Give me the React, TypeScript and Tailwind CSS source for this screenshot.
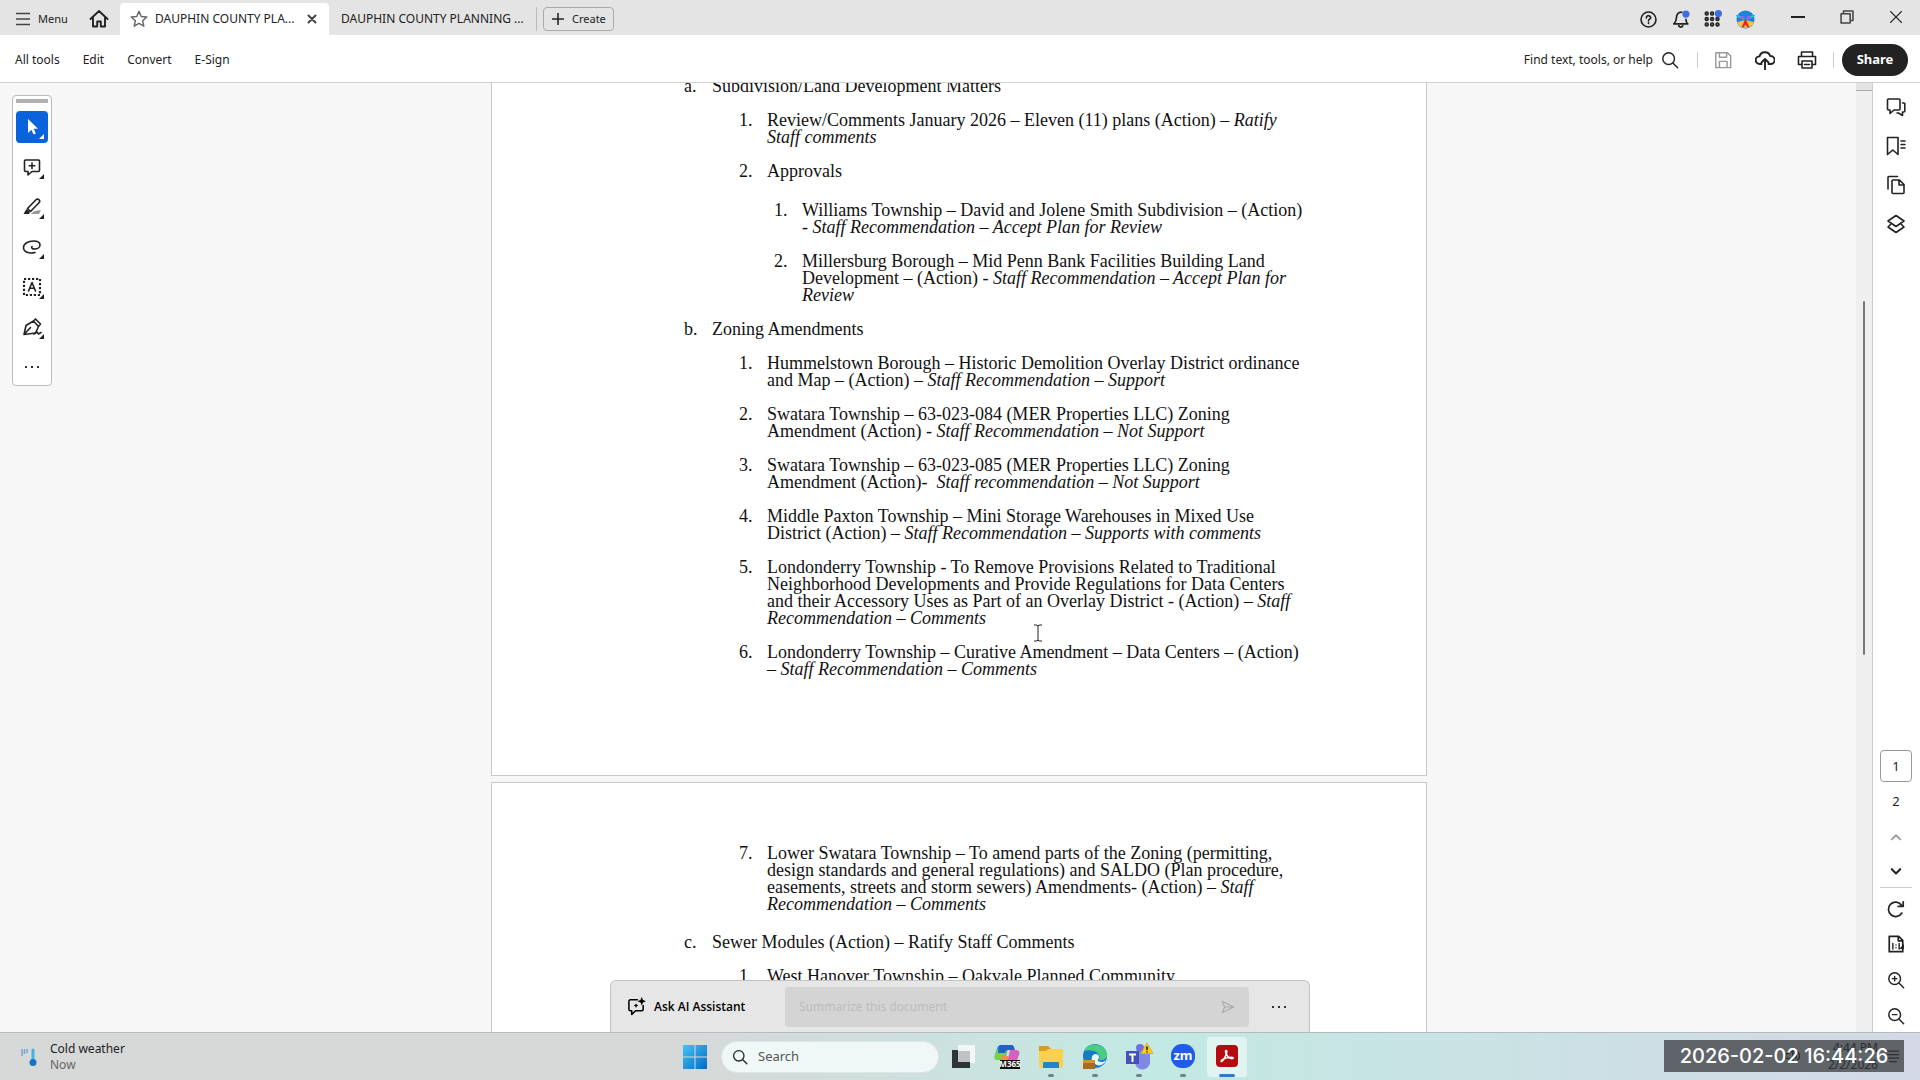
import type { ReactNode } from "react";

type IconProps = { className?: string; children: ReactNode };

const Icon = ({ className = "size-5", children }: IconProps) => (
  <svg
    viewBox="0 0 20 20"
    fill="none"
    stroke="currentColor"
    strokeWidth="1.6"
    strokeLinecap="round"
    strokeLinejoin="round"
    className={`shrink-0 ${className}`}
    aria-hidden="true"
  >
    {children}
  </svg>
);

const searchShape = (
  <>
    <circle cx="8.5" cy="8.5" r="6.5" />
    <path d="M13.500 13.500l5 5" />
  </>
);

const tools = [
  {
    label: "Select",
    icon: (
      <path
        d="M6 2v14l3.400-3.300 2.200 4.800 2.300-1-2.200-4.700H16z"
        fill="currentColor"
        stroke="none"
      />
    ),
  },
  {
    label: "Add comment",
    icon: (
      <path d="M3.500 3h13a1 1 0 011 1v9.500a1 1 0 01-1 1H10l-4 3.500v-3.500H3.500a1 1 0 01-1-1V4a1 1 0 011-1zM10 6v5.500M7.200 8.700h5.600" />
    ),
  },
  {
    label: "Highlight",
    icon: (
      <>
        <path d="M9 17c2-3 5-3.500 10-4l-2 4z" fill="#999" stroke="none" />
        <path d="M5.500 11.500L14 2.800a2 2 0 013 3L8.500 14.500zM5.500 11.500l3 3" />
        <path d="M4.500 12L1.500 17h5.500l1-2z" fill="currentColor" stroke="none" />
      </>
    ),
  },
  {
    label: "Draw",
    icon: (
      <path d="M13 15.500c-6 1.500-11.500-.5-11.500-5 0-4 5-6.500 10-6.500 4 0 6.500 1.500 6.500 4s-2.500 4-5.500 4c-2 0-3.500-1-2.500-2.500" />
    ),
  },
  {
    label: "Text box",
    icon: (
      <>
        <path
          d="M2 2h16v16H2z"
          strokeDasharray="2.200 1.800"
          strokeLinecap="butt"
          strokeWidth="2.200"
        />
        <path d="M6.500 14L10 5.500l3.500 8.500M7.800 11.300h4.400" />
      </>
    ),
  },
  {
    label: "Sign",
    icon: (
      <>
        <path d="M2 17.500L4 8.500l7.500-4.500 5 5.500-3 6.500zM2 17.500l6.500-7M11.500 4l2-2 5 5-2 2.500" />
        <path d="M12 17l3-2 1.500 2 2.500-1.500" />
      </>
    ),
  },
];

const panels = [
  {
    label: "Comments",
    icon: (
      <path d="M2.500 2H13a1 1 0 011 1v9a1 1 0 01-1 1H8l-4 3.500V13H2.500a1 1 0 01-1-1V3a1 1 0 011-1M16.500 6H18a.8.800 0 01.8.800V14a1 1 0 01-1 1h-1.300v3.500L12.500 16H11" />
    ),
  },
  {
    label: "Bookmarks",
    icon: (
      <path d="M1.500 1.500h10.500v17l-5.200-4.500-5.300 4.500zM15 5h4M15 8.500h4M15 12h4" />
    ),
  },
  {
    label: "Pages",
    icon: (
      <path d="M2 14V2.500a1 1 0 011-1h8.500M7 5h6.500l4.500 4.500v8a1 1 0 01-1 1H7a1 1 0 01-1-1V6a1 1 0 011-1zM13 5v5h5" />
    ),
  },
  {
    label: "Layers",
    icon: (
      <path d="M10 1.500l8 5.500-8 5.500L2 7zM4.500 10.500L2 13l8 5.500 8-5.500-2.500-2.500" />
    ),
  },
];

const zoningItems: [string, string][] = [
  [
    "Hummelstown Borough – Historic Demolition Overlay District ordinance\nand Map – (Action) – ",
    "Staff Recommendation – Support",
  ],
  [
    "Swatara Township – 63-023-084 (MER Properties LLC) Zoning\nAmendment (Action) - ",
    "Staff Recommendation – Not Support",
  ],
  [
    "Swatara Township – 63-023-085 (MER Properties LLC) Zoning\nAmendment (Action)-  ",
    "Staff recommendation – Not Support",
  ],
  [
    "Middle Paxton Township – Mini Storage Warehouses in Mixed Use\nDistrict (Action) – ",
    "Staff Recommendation – Supports with comments",
  ],
  [
    "Londonderry Township - To Remove Provisions Related to Traditional\nNeighborhood Developments and Provide Regulations for Data Centers\nand their Accessory Uses as Part of an Overlay District - (Action) – ",
    "Staff\nRecommendation – Comments",
  ],
  [
    "Londonderry Township – Curative Amendment – Data Centers – (Action)\n– ",
    "Staff Recommendation – Comments",
  ],
];

const Item = ({
  marker,
  text,
  note,
  children,
}: {
  marker: string;
  text: string;
  note?: string;
  children?: ReactNode;
}) => (
  <li className="flex">
    <span className="w-7 shrink-0">{marker}</span>
    <div>
      <p className="whitespace-pre">
        {text}
        {note && <em>{note}</em>}
      </p>
      {children}
    </div>
  </li>
);

const Corner = ({ className = "" }: { className?: string }) => (
  <svg
    viewBox="0 0 5 5"
    className={`absolute right-1 bottom-1 size-[5px] ${className}`}
    aria-hidden="true"
  >
    <path d="M5 0v5H0z" fill="currentColor" />
  </svg>
);

const Dots = () => (
  <>
    <span className="size-0.5 bg-[#333]" />
    <span className="size-0.5 bg-[#333]" />
    <span className="size-0.5 bg-[#333]" />
  </>
);

const TabBar = () => (
  <header className="flex h-[35px] shrink-0 items-center bg-[#e4e4e4] pt-[3px] text-xs">
    <button className="flex w-[86px] items-center gap-2 pl-4 text-[11px]">
      <svg viewBox="0 0 14 14" className="size-[14px]" aria-hidden="true">
        <path d="M0 1.500h14M0 7h14M0 12.500h14" stroke="#444" strokeWidth="1.600" />
      </svg>
      Menu
    </button>
    <button aria-label="Home" className="flex w-[34px] shrink-0 pl-[3px]">
      <Icon>
        <path
          d="M1.500 10L10 2l8.500 8M4 8.500v9h4.200v-5h3.600v5H16v-9"
          strokeWidth="1.900"
        />
      </Icon>
    </button>
    <div className="flex h-8 w-[209px] shrink-0 items-center rounded-t bg-white pl-2.5">
      <button aria-label="Add to starred">
        <Icon className="size-[18px] text-[#666]">
          <path d="M10 1.500l2.500 5.700 6.200.6-4.700 4.100 1.400 6.100-5.400-3.200L4.600 18 6 11.900 1.300 7.800l6.200-.6z" />
        </Icon>
      </button>
      <a href="#first" className="ml-[7px] w-[152px] whitespace-nowrap">
        DAUPHIN COUNTY PLA...
      </a>
      <button aria-label="Close tab">
        <Icon className="size-[10px] text-[#444]">
          <path d="M3 3l14 14M17 3L3 17" strokeWidth="4" />
        </Icon>
      </button>
    </div>
    <a
      href="#second"
      className="flex h-6 w-[208px] shrink-0 items-center border-r border-[#bbb] pl-3 whitespace-nowrap"
    >
      DAUPHIN COUNTY PLANNING ...
    </a>
    <button className="ml-1.5 flex h-6 w-[71px] items-center gap-2 rounded border border-[#aaa] pl-2 text-[11px]">
      <Icon className="size-3">
        <path d="M10 1v18M1 10h18" strokeWidth="2.600" />
      </Icon>
      Create
    </button>
    <div className="ml-auto flex items-center">
      <button aria-label="Help" className="flex w-8 justify-center">
        <Icon className="size-[17px]">
          <circle cx="10" cy="10" r="8.800" strokeWidth="1.900" />
          <path
            d="M7.500 8c0-3.500 5.300-3 5 0-.2 1.500-2.500 1.800-2.500 3.500M10 14v.5"
            strokeWidth="2"
          />
        </Icon>
      </button>
      <button aria-label="Notifications" className="flex w-[33px] justify-center">
        <Icon className="size-[18px]">
          <path
            d="M11 2.500C7 2 5 5 5 8c0 4-1 5.500-3 7.500h15.500c-1.500-1.500-2-3-2-5M7.500 17.500c1 2 3.500 2 4.500 0"
            strokeWidth="1.900"
          />
          <circle cx="15.500" cy="4.500" r="4" fill="#3b6fe0" stroke="none" />
        </Icon>
      </button>
      <button aria-label="Apps" className="flex w-8 justify-center">
        <Icon className="size-[18px]">
          {[4, 10, 16].map((y) =>
            [3, 9, 15].map((x) => (
              <circle
                key={`${x}-${y}`}
                cx={x}
                cy={y}
                r="1.700"
                fill="#666"
                strokeWidth="1.600"
              />
            ))
          )}
          <circle cx="16" cy="4" r="4" fill="#3b6fe0" stroke="none" />
        </Icon>
      </button>
      <button aria-label="Account" className="flex w-8 justify-center">
        <Icon className="size-[19px]">
          <g stroke="none">
            <circle cx="10" cy="10" r="9.500" fill="#1b83dc" />
            <path d="M1 13l7-2h4l7 2c-3 8-15 8-18 0z" fill="#f5c443" />
            <path d="M1 6l7 3M19 6l-7 3" stroke="#24c1ee" strokeWidth="2" />
            <path d="M10 9l-4 9h2.500L10 15l1.500 3H14z" fill="#e0262c" />
            <circle cx="6.500" cy="8" r="2" fill="#a263d4" />
            <circle cx="13.500" cy="8" r="2" fill="#a263d4" />
          </g>
        </Icon>
      </button>
      <div className="ml-3 flex items-center pb-1">
        <button aria-label="Minimize" className="flex w-[49px] justify-center">
          <span className="h-0.5 w-[14px] bg-[#222]" />
        </button>
        <button aria-label="Restore" className="flex w-[49px] justify-center">
          <Icon className="size-[14px] text-[#444]">
            <path
              d="M1.500 5.500h13v13h-13zM5 5V1.500h13.500V15H15"
              strokeWidth="2.200"
            />
          </Icon>
        </button>
        <button aria-label="Close" className="flex w-[49px] justify-center">
          <Icon className="size-3">
            <path d="M1 1l18 18M19 1L1 19" strokeWidth="2.200" />
          </Icon>
        </button>
      </div>
    </div>
  </header>
);

const Toolbar = () => (
  <div className="flex h-12 shrink-0 items-center border-b border-[#d0d0d0] bg-white pt-0.5 text-xs">
    <nav className="flex gap-[23px] pl-[15px]">
      <button>All tools</button>
      <button>Edit</button>
      <button>Convert</button>
      <button>E-Sign</button>
    </nav>
    <div className="ml-auto flex items-center pr-3">
      <button className="flex items-center gap-2">
        Find text, tools, or help
        <Icon className="size-[18px]">{searchShape}</Icon>
      </button>
      <span className="ml-[18px] h-4 w-px bg-[#ccc]" />
      <button aria-label="Save" className="ml-4 text-[#999]">
        <Icon className="size-[18px]">
          <path d="M2 2h13l3.500 3.500v13H2zM6 2v5h8V2M6 18v-6.500h8.500V18" />
        </Icon>
      </button>
      <button aria-label="Upload" className="ml-[23px]">
        <Icon>
          <path
            d="M6.500 14H4.500a3.800 3.800 0 010-7.600 5.600 5.600 0 0110.700-.4A4 4 0 0116 14h-2.500M10 19.500V9.500M6.500 12.500L10 9l3.500 3.500"
            strokeWidth="1.900"
          />
        </Icon>
      </button>
      <button aria-label="Print" className="ml-[22px]">
        <Icon>
          <path d="M4 14.500H1.500V6.500h17v8H16M4.500 6V2h11v4M5 11h10v7H5zM7.500 14.500h5" />
        </Icon>
      </button>
      <span className="ml-4 h-4 w-px bg-[#ccc]" />
      <button className="ml-2 h-8 w-[66px] rounded-full bg-[#222] text-[13px] font-bold text-white">
        Share
      </button>
    </div>
  </div>
);

const ToolPalette = () => (
  <aside className="z-10 w-[62px] shrink-0 pt-3 pl-3">
    <div className="flex w-10 flex-col items-center gap-2 rounded border border-[#bbb] bg-white pt-[3px] pb-0.5">
      <span className="h-1 w-8 bg-[#b0b0b0]" />
      {tools.map((tool, i) => (
        <button
          key={tool.label}
          aria-label={tool.label}
          className={`relative flex size-8 items-center justify-center rounded-sm ${
            i === 0 ? "bg-[#0a62dc] text-white" : ""
          }`}
        >
          <Icon>{tool.icon}</Icon>
          <Corner />
        </button>
      ))}
      <button aria-label="More tools" className="flex h-8 items-center gap-1">
        <Dots />
      </button>
    </div>
  </aside>
);

const Document = () => (
  <article className="mx-auto flex h-full w-[936px] flex-col gap-[6px] overflow-hidden font-['Liberation_Serif','Times_New_Roman',serif] text-lg leading-[17px] text-[#111]">
    <section className="h-[693px] shrink-0 border border-t-0 border-[#c8c8c8] bg-white pl-[192px]">
      <ol className="-mt-[5px] flex flex-col gap-[17px]">
        <Item marker="a." text="Subdivision/Land Development Matters">
          <ol className="mt-[17px] ml-[27px] flex flex-col gap-[17px]">
            <Item
              marker="1."
              text="Review/Comments January 2026 – Eleven (11) plans (Action) – "
              note={"Ratify\nStaff comments"}
            />
            <Item marker="2." text="Approvals">
              <ol className="mt-[22px] ml-[7px] flex flex-col gap-[17px]">
                <Item
                  marker="1."
                  text={
                    "Williams Township – David and Jolene Smith Subdivision – (Action)\n- "
                  }
                  note="Staff Recommendation – Accept Plan for Review"
                />
                <Item
                  marker="2."
                  text={
                    "Millersburg Borough – Mid Penn Bank Facilities Building Land\nDevelopment – (Action) - "
                  }
                  note={"Staff Recommendation – Accept Plan for\nReview"}
                />
              </ol>
            </Item>
          </ol>
        </Item>
        <Item marker="b." text="Zoning Amendments">
          <ol className="mt-[17px] ml-[27px] flex flex-col gap-[17px]">
            {zoningItems.map(([text, note], i) => (
              <Item key={text} marker={`${i + 1}.`} text={text} note={note} />
            ))}
          </ol>
        </Item>
      </ol>
    </section>
    <section className="h-[900px] shrink-0 border border-[#c8c8c8] bg-white pt-[62px] pl-[192px]">
      <ol start={7} className="ml-[55px]">
        <Item
          marker="7."
          text={
            "Lower Swatara Township – To amend parts of the Zoning (permitting,\ndesign standards and general regulations) and SALDO (Plan procedure,\neasements, streets and storm sewers) Amendments- (Action) – "
          }
          note={"Staff\nRecommendation – Comments"}
        />
      </ol>
      <ol className="mt-[21px]">
        <Item marker="c." text="Sewer Modules (Action) – Ratify Staff Comments">
          <ol className="mt-[17px] ml-[27px]">
            <Item
              marker="1."
              text="West Hanover Township – Oakvale Planned Community"
            />
          </ol>
        </Item>
      </ol>
    </section>
  </article>
);

const AssistantBar = () => (
  <div className="absolute bottom-0 left-1/2 ml-[-350px] flex h-[52px] w-[700px] items-center rounded-t-md border border-b-0 border-[#c4c4c4] bg-[#e6e6e6]">
    <button className="flex w-[174px] items-center gap-2 pl-4 font-['Open_Sans','Noto_Sans',sans-serif] text-xs font-semibold text-black">
      <Icon className="size-[19px]">
        <path d="M11 3H3.500a1.500 1.500 0 00-1.500 1.500V13A1.500 1.500 0 003.500 14.500H5V18.500l4-4h6.500A1.500 1.500 0 0017 13V9" />
        <path
          d="M15.500 0l1.300 3.200L20 4.500l-3.200 1.300L15.500 9l-1.300-3.200L11 4.500l3.200-1.300zM9.500 6.500l.8 1.700 1.700.8-1.700.8-.8 1.700-.8-1.700L7 9l1.700-.8z"
          fill="currentColor"
          stroke="none"
        />
      </Icon>
      Ask AI Assistant
    </button>
    <label className="flex h-10 w-[464px] items-center rounded bg-[#d4d4d4] px-3.5">
      <input
        aria-label="Ask about this document"
        placeholder="Summarize this document"
        className="flex-1 bg-transparent text-xs outline-none placeholder:text-[#bcbcbc]"
      />
      <Icon className="size-[14px] text-[#aaa]">
        <path d="M2 2l16 8-16 8 3-8zM5 10h12" />
      </Icon>
    </label>
    <button aria-label="More" className="mx-auto flex gap-1">
      <Dots />
    </button>
  </div>
);

const PanelRail = () => (
  <aside className="flex w-12 shrink-0 flex-col items-center border-l border-[#ccc] bg-white pr-px">
    <div className="flex flex-col gap-[19px] pt-[14px]">
      {panels.map((panel) => (
        <button key={panel.label} aria-label={panel.label}>
          <Icon className="size-5">{panel.icon}</Icon>
        </button>
      ))}
    </div>
    <div className="mt-auto flex flex-col items-center pb-[7px] text-[13px]">
      <input
        aria-label="Page number"
        defaultValue="1"
        className="size-8 rounded border border-[#999] text-center"
      />
      <span className="mt-2.5">2</span>
      <button aria-label="Previous page" className="mt-5 text-[#999]">
        <Icon className="size-3">
          <path d="M3 14l7-7 7 7" strokeWidth="3" />
        </Icon>
      </button>
      <button aria-label="Next page" className="mt-[22px]">
        <Icon className="size-3">
          <path d="M3 7l7 7 7-7" strokeWidth="3.500" />
        </Icon>
      </button>
      <span className="mt-[10px] h-px w-8 bg-[#ccc]" />
      <button aria-label="Rotate" className="mt-3">
        <Icon className="size-[18px]">
          <path
            d="M16.500 14.500A8 8 0 1116 5.500M18 2v5h-5.500"
            strokeWidth="1.900"
          />
        </Icon>
      </button>
      <button aria-label="Actual size" className="relative mt-[17px] w-6">
        <Icon className="mx-auto size-[18px]">
          <path
            d="M2.500 1.500h10.500L17.500 6v12.500h-15zM12.500 1.500V6.500h5"
            strokeWidth="1.900"
          />
          <path d="M6.500 9.500v6M13.500 9.500v6M10 11v.1M10 14v.1" />
        </Icon>
        <Corner className="-right-0.5 -bottom-1" />
      </button>
      <button aria-label="Zoom in" className="mt-[18px]">
        <Icon className="size-[18px]">
          {searchShape}
          <path d="M8.500 6v5M6 8.500h5" />
        </Icon>
      </button>
      <button aria-label="Zoom out" className="mt-[18px]">
        <Icon className="size-[18px]">
          {searchShape}
          <path d="M6 8.500h5" />
        </Icon>
      </button>
    </div>
  </aside>
);

const taskbarApps = [
  {
    label: "Task view",
    open: false,
    icon: (
      <>
        <path d="M11 4h17v18H11z" fill="#f4f6f6" />
        <path d="M11 10h12v12H11z" fill="#bfc3c4" />
        <path d="M5 9h6v12h12v6H5z" fill="#2d3538" />
      </>
    ),
  },
  {
    label: "Copilot",
    open: false,
    icon: (
      <>
        <path d="M10 4h8l-4 15H7c-3 0-4-2-3-5l2-7c.6-2 2-3 4-3z" fill="#38a7dc" />
        <path d="M4 14l2-5h10l-3 10H7c-3 0-4-2-3-5z" fill="#7ccf4d" />
        <path d="M10 4h10c3 0 3 2 4 5h-7c-2 0-2 1-3 3H7c1-5 0-8 3-8z" fill="#2361c9" />
        <path d="M19 9h6c3 0 4 2 3 5l-3 8h-9z" fill="#dc5cc0" />
        <path d="M11 15h7l-2 6h-6z" fill="#f58a4a" />
        <path d="M9 19h20v9H9z" fill="#111" />
        <text
          x="19"
          y="26"
          fontSize="8"
          fontWeight="700"
          textAnchor="middle"
          fill="#fff"
        >
          M365
        </text>
      </>
    ),
  },
  {
    label: "File Explorer",
    open: true,
    icon: (
      <>
        <path d="M4 5h9l3 3h11a1 1 0 011 1v5H4z" fill="#dc9a18" />
        <path d="M13 8h14a1 1 0 011 1v16a2 2 0 01-2 2H6a2 2 0 01-2-2V10h7z" fill="#fbd04f" />
        <path d="M8 22a1 1 0 011-1h14a1 1 0 011 1v5H8z" fill="#2782cc" />
      </>
    ),
  },
  {
    label: "Edge",
    open: true,
    icon: (
      <>
        <circle cx="16" cy="15" r="12" fill="#167ac6" />
        <path d="M5 10C9 1 24 1 28 12c1 5-3 8-8 7 3-6-5-12-15-9z" fill="#4bcc83" />
        <path d="M14 14c2-2 6-1 6 2 0 2-2 3-1 4 3 2 6 1 8-1-2 5-7 7-11 4-4-2-4-7-2-9z" fill="#eaf8fa" />
        <path d="M4 19h12v9H4z" fill="#a9691e" />
        <path d="M4 19h12v3H4z" fill="#d89032" />
      </>
    ),
  },
  {
    label: "Teams",
    open: true,
    icon: (
      <>
        <circle cx="17" cy="7" r="4" fill="#6a75dc" />
        <path d="M11 11h16v9a7 7 0 01-15 2z" fill="#7f89e4" />
        <path d="M3 10h13v13H3z" fill="#4550b9" />
        <path d="M6 13.500h7M9.500 13.500V21" stroke="#fff" strokeWidth="2" />
        <path
          d="M24 2l6 10.500H18z"
          fill="#f6cf2f"
          stroke="#e0b020"
          strokeLinejoin="round"
        />
        <path d="M24 5.500v3.500M24 10.300v1.200" stroke="#111" strokeWidth="1.500" />
      </>
    ),
  },
  {
    label: "Zoom",
    open: true,
    icon: (
      <>
        <rect x="4" y="3" width="24" height="24" rx="11" fill="#1f5ce8" />
        <text
          x="16"
          y="19"
          fontSize="13"
          fontWeight="700"
          textAnchor="middle"
          fill="#fff"
        >
          zm
        </text>
      </>
    ),
  },
  {
    label: "Acrobat",
    open: true,
    icon: (
      <>
        <rect x="5" y="4" width="22" height="22" rx="4" fill="#b30b0f" />
        <path
          d="M10.500 20.500c2-1 4.500-5.500 5.300-9.500.3-2-1.600-2-1.200 0 .8 3.200 3.400 6.500 6.400 6.700 1.800 0 1.500-1.500-.6-1.500-3.600 0-6.400.8-9 2.500-1.200 1-1.600 2-.9 1.800z"
          fill="none"
          stroke="#fff"
          strokeWidth="1.600"
        />
      </>
    ),
  },
];

const Taskbar = () => (
  <footer className="relative flex h-12 shrink-0 items-center justify-center border-t border-[#b5bcc0] bg-linear-to-r from-[#d7d8d8] from-35% via-[#c2e9e3] via-60% to-[#d3d9e6]">
    <button className="absolute top-2 left-5 flex items-center gap-3 text-left text-xs leading-4">
      <svg viewBox="0 0 18 20" className="h-5 w-[18px]" aria-hidden="true">
        <path d="M2 2v7M4.500 2v5M7 2v4" stroke="#79a5d0" strokeWidth="1.500" />
        <path d="M13 3v12" stroke="#40b2e8" strokeWidth="3" strokeLinecap="round" />
        <circle cx="13" cy="15.500" r="3.500" fill="#1672c4" />
      </svg>
      <span>
        Cold weather
        <br />
        <span className="text-[#666]">Now</span>
      </span>
    </button>
    <div className="ml-2.5 flex items-center">
      <button aria-label="Start" className="mr-3.5">
        <svg viewBox="0 0 24 24" className="size-6" aria-hidden="true">
          <defs>
            <linearGradient id="start" x2="1" y2="1">
              <stop stopColor="#43c4f5" />
              <stop offset="1" stopColor="#0669c4" />
            </linearGradient>
          </defs>
          <path
            d="M0 0h11.500v11.500H0zM12.500 0H24v11.500H12.500zM0 12.500h11.500V24H0zM12.500 12.500H24V24H12.500z"
            fill="url(#start)"
          />
        </svg>
      </button>
      <label className="flex h-8 w-[218px] items-center gap-2.5 rounded-full border border-[#dde6e6] bg-[#f0f7f7] pl-2.5">
        <Icon className="size-4">{searchShape}</Icon>
        <input
          aria-label="Search"
          placeholder="Search"
          className="w-36 bg-transparent text-[13px] outline-none placeholder:text-[#555]"
        />
      </label>
      <div className="ml-1 flex gap-1">
        {taskbarApps.map((app) => (
          <button
            key={app.label}
            aria-label={app.label}
            className={`relative flex size-10 items-center justify-center rounded ${
              app.label === "Acrobat" ? "bg-[#e0f5f2]" : ""
            }`}
          >
            <svg viewBox="0 0 32 32" className="size-8" aria-hidden="true">
              {app.icon}
            </svg>
            {app.open && (
              <span
                className={`absolute bottom-0 h-[3px] rounded-full ${
                  app.label === "Acrobat" ? "w-4 bg-[#2b7fc0]" : "w-1.5 bg-[#6d8587]"
                }`}
              />
            )}
          </button>
        ))}
      </div>
    </div>
    <div className="absolute top-[7px] right-4 flex h-8 w-[240px] items-center justify-center overflow-hidden bg-[#5e6468]">
      <div className="absolute right-1 flex items-center gap-2 text-[#2b2f31]">
        <Icon className="size-4">
          <path d="M2 7v6h4l5 4V3L6 7zM14 7c2 2 2 4 0 6M17 5c3 3 3 7 0 10" />
        </Icon>
        <p className="w-[70px] text-right text-xs leading-[17px]">
          4:44 PM
          <br />
          2/2/2026
        </p>
        <Icon className="size-[14px]">
          <path d="M2 3h16M2 8h16M2 13h16M5 18h10" />
        </Icon>
      </div>
      <time className="relative font-['Inter',sans-serif] text-xl font-medium whitespace-nowrap text-white">
        2026-02-02 16:44:26
      </time>
    </div>
  </footer>
);

export default function App() {
  return (
    <div className="flex h-screen flex-col overflow-hidden bg-[#f7f7f7] font-['Noto_Sans',sans-serif] text-[#222]">
      <TabBar />
      <Toolbar />
      <div className="relative flex min-h-0 flex-1">
        <ToolPalette />
        <main className="min-w-0 flex-1">
          <Document />
        </main>
        <div className="flex w-4 shrink-0 flex-col items-center bg-[#efefef]">
          <span className="h-2 w-full border-b border-[#aaa] bg-[#e4e4e4]" />
          <span className="mt-[210px] h-[354px] w-0.5 rounded-full bg-[#777]" />
        </div>
        <PanelRail />
        <AssistantBar />
        <svg
          viewBox="0 0 10 18"
          className="absolute top-[541px] left-1/2 ml-[73px] h-[18px] w-2.5"
          aria-hidden="true"
        >
          <path
            d="M1 1h3l1 1 1-1h3M5 2v14M1 17h3l1-1 1 1h3"
            fill="none"
            stroke="#222"
          />
        </svg>
      </div>
      <Taskbar />
    </div>
  );
}
